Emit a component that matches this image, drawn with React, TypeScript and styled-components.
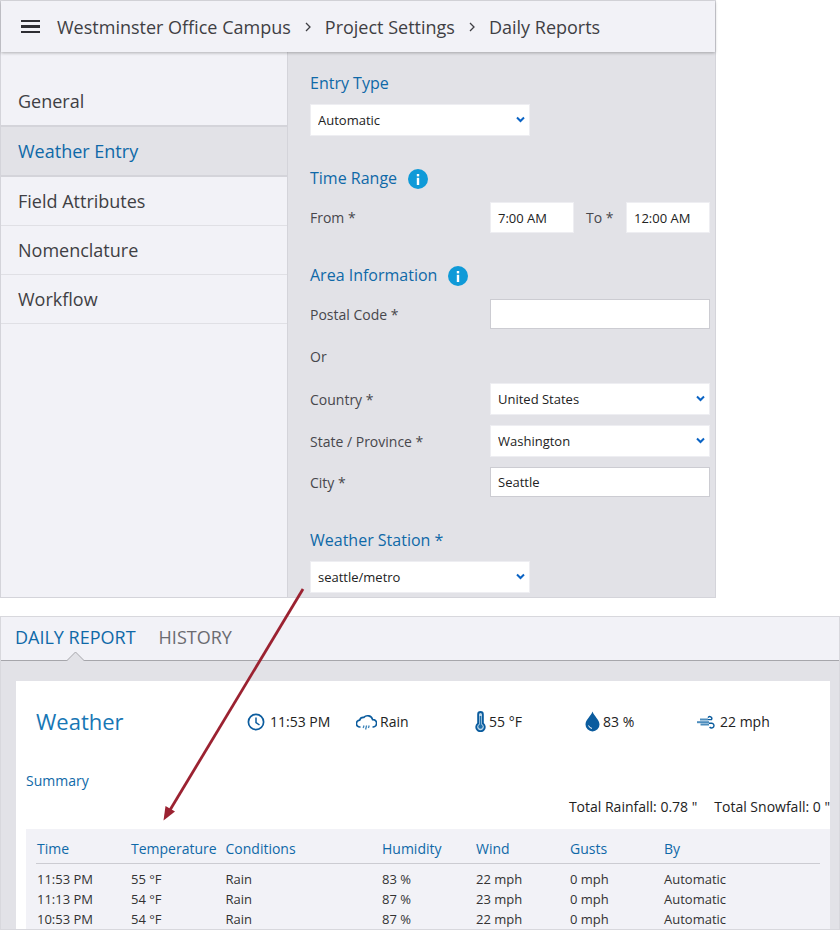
import styled, { createGlobalStyle } from "styled-components";

const GlobalStyle = createGlobalStyle`
  html, body {
    margin: 0;
    padding: 0;
    background: #fff;
    font-family: "Open Sans", "Liberation Sans", sans-serif;
    color: #3a3a3f;
  }
  * {
    box-sizing: border-box;
  }
`;

const BLUE = "#0f69a8";

const Page = styled.div`
  position: relative;
  width: 840px;
  height: 930px;
  overflow: hidden;
`;
const SettingsPanel = styled.div`
  width: 716px;
  height: 598px;
  display: flex;
  flex-direction: column;
  background: #e2e2e7;
  border: 1px solid #d4d4da;
  border-top-color: #dcdce1;
`;
const Header = styled.div`
  height: 51px;
  flex: none;
  display: flex;
  align-items: center;
  padding-left: 20px;
  background: #f2f2f7;
  box-shadow: 0 1px 3px rgba(0, 0, 0, 0.28);
  position: relative;
  font-size: 18px;
  color: #3f3f44;
`;
const Hamburger = styled.div`
  width: 19px;
  height: 13px;
  margin-right: 17px;
  border-top: 2.5px solid #2e2e33;
  border-bottom: 2.5px solid #2e2e33;
  display: flex;
  align-items: center;
  &::before {
    content: "";
    width: 100%;
    height: 2.5px;
    background: #2e2e33;
  }
`;
const Crumb = styled.span`
  line-height: 24px;
`;
const CrumbSep = styled.svg`
  width: 8px;
  height: 10px;
  margin: 0 13px;
`;
const Body = styled.div`
  flex: 1;
  display: flex;
  min-height: 0;
`;
const Sidebar = styled.div`
  width: 287px;
  flex: none;
  padding-top: 24px;
  background: #f2f2f7;
  border-right: 1px solid #d4d4da;
`;
const NavItem = styled.div<{ $active?: boolean; $strong?: boolean; $height: number }>`
  height: ${(p) => p.$height}px;
  display: flex;
  align-items: center;
  padding-left: 17px;
  font-size: 18px;
  background: ${(p) => (p.$active ? "#e2e2e7" : "transparent")};
  color: ${(p) => (p.$active ? BLUE : "#3f3f44")};
  border-bottom: ${(p) => (p.$strong ? "2px solid #d4d4da" : "1px solid #e0e0e5")};
`;
const Form = styled.div`
  flex: 1;
  padding: 20px 6px 0 22px;
  font-size: 14px;
`;
const SectionTitle = styled.div<{ $top?: number; $bottom: number }>`
  height: 22px;
  display: flex;
  align-items: center;
  gap: 11px;
  margin-top: ${(p) => p.$top ?? 0}px;
  margin-bottom: ${(p) => p.$bottom}px;
  font-size: 16px;
  color: ${BLUE};
`;
const InfoBadge = styled.span`
  width: 20px;
  height: 20px;
  border-radius: 50%;
  background: #0f9ad8;
  color: #fff;
  display: flex;
  align-items: center;
  justify-content: center;
  flex: none;
  position: relative;
  top: 1px;
`;
const FieldRow = styled.div<{ $height?: number; $bottom?: number }>`
  display: flex;
  align-items: center;
  height: ${(p) => p.$height ?? 31}px;
  margin-bottom: ${(p) => p.$bottom ?? 11}px;
`;
const FieldLabel = styled.div`
  width: 180px;
  flex: none;
  color: #47474c;
`;
const ToLabel = styled.div`
  width: 52px;
  flex: none;
  padding-left: 12px;
  color: #47474c;
`;
const TextBox = styled.input<{ $width: number; $bordered?: boolean }>`
  width: ${(p) => p.$width}px;
  height: 100%;
  padding: 0 7px;
  border: 1px solid ${(p) => (p.$bordered ? "#ccccd2" : "#eeeef2")};
  border-radius: 0;
  outline: none;
  background: #fff;
  color: #222;
  font: 13px "Open Sans", sans-serif;
`;
const SelectWrap = styled.div<{ $width: number }>`
  position: relative;
  width: ${(p) => p.$width}px;
  height: 32px;
`;
const SelectBox = styled.select`
  width: 100%;
  height: 100%;
  padding: 0 24px 0 7px;
  appearance: none;
  border: 1px solid #eeeef2;
  border-radius: 0;
  outline: none;
  background: #fff;
  color: #222;
  font: 13px "Open Sans", sans-serif;
`;
const Chevron = styled.svg`
  position: absolute;
  right: 5px;
  top: 12px;
  width: 9px;
  height: 7px;
`;
const ReportPanel = styled.div`
  margin-top: 18px;
  width: 840px;
  height: 314px;
  display: flex;
  flex-direction: column;
  background: #e2e2e7;
  border: 1px solid #d8d8dd;
`;
const Tabs = styled.div`
  height: 44px;
  flex: none;
  display: flex;
  align-items: center;
  gap: 23px;
  padding: 0 0 3px 14px;
  background: #f2f2f7;
  border-bottom: 1px solid #a6a6ab;
  position: relative;
  font-size: 18px;
`;
const Tab = styled.div<{ $active?: boolean }>`
  color: ${(p) => (p.$active ? BLUE : "#6b6b70")};
`;
const TabNotch = styled.svg`
  position: absolute;
  left: 65px;
  bottom: -1px;
  width: 19px;
  height: 10px;
`;
const Card = styled.div`
  flex: 1;
  margin: 20px 9px 0 15px;
  padding: 0 0 0 10px;
  background: #fff;
  display: flex;
  flex-direction: column;
  min-height: 0;
`;
const WeatherBar = styled.div`
  height: 80px;
  flex: none;
  display: flex;
  align-items: center;
  padding-top: 1px;
`;
const WeatherTitle = styled.div`
  width: 221px;
  margin-top: -2px;
  padding-left: 10px;
  font-size: 22px;
  color: #1877b5;
`;
const Stat = styled.div<{ $width: number; $gap?: number }>`
  width: ${(p) => p.$width}px;
  flex: none;
  display: flex;
  align-items: center;
  gap: ${(p) => p.$gap ?? 3}px;
  font-size: 14px;
  color: #222;
`;
const SummaryLink = styled.div`
  margin-top: 10px;
  height: 20px;
  font-size: 14px;
  line-height: 20px;
  color: ${BLUE};
`;
const TotalsRow = styled.div`
  display: flex;
  justify-content: flex-end;
  gap: 17px;
  height: 20px;
  margin-top: 6px;
  font-size: 14px;
  line-height: 20px;
  color: #222;
`;
const TableWrap = styled.div`
  margin-top: 12px;
  flex: 1;
  width: 804px;
  padding: 10px 10px 0;
  background: #f2f2f7;
`;
const Row = styled.div`
  display: grid;
  grid-template-columns: 94px 94.5px 156.5px 94px 94px 94px 1fr;
  height: 20px;
  line-height: 20px;
  font-size: 13px;
  color: #333;
`;
const HeadRow = styled(Row)`
  height: 25px;
  margin-bottom: 5px;
  border-bottom: 1px solid #ccccd2;
  font-size: 14px;
  color: ${BLUE};
`;
const Cell = styled.div`
  padding-left: 1px;
  white-space: nowrap;
`;
const ArrowOverlay = styled.svg`
  position: absolute;
  left: 0;
  top: 0;
  width: 840px;
  height: 930px;
  pointer-events: none;
`;

const DownChevron = () => (
  <Chevron viewBox="0 0 9 7">
    <path d="M1 1.5 4.5 5 8 1.5" fill="none" stroke="#0a63c4" strokeWidth="2" />
  </Chevron>
);

const Select = ({ value, width }: { value: string; width: number }) => (
  <SelectWrap $width={width}>
    <SelectBox defaultValue={value}>
      <option>{value}</option>
    </SelectBox>
    <DownChevron />
  </SelectWrap>
);

const Separator = () => (
  <CrumbSep viewBox="0 0 8 10">
    <path d="M2 1 6 5 2 9" fill="none" stroke="#3f3f44" strokeWidth="1.3" />
  </CrumbSep>
);

const Info = () => (
  <InfoBadge>
    <svg width="4" height="11" viewBox="0 0 4 11">
      <rect x="0.8" y="0" width="2.4" height="2.4" fill="#fff" />
      <rect x="0.8" y="3.8" width="2.4" height="7.2" fill="#fff" />
    </svg>
  </InfoBadge>
);

const ClockIcon = () => (
  <svg width="18" height="18" viewBox="0 0 18 18">
    <circle cx="9" cy="9" r="7.6" fill="none" stroke="#0b5c9e" strokeWidth="1.7" />
    <path d="M9 4.5V9.5L12.5 12" fill="none" stroke="#0b5c9e" strokeWidth="1.5" />
  </svg>
);

const RainIcon = () => (
  <svg width="21" height="18" viewBox="0 0 21 18">
    <path
      d="M4.5 14H4A3.4 3.4 0 0 1 3.6 7.2 4 4 0 0 1 7.8 4.4 5.2 5.2 0 0 1 16.6 6.6 3.7 3.7 0 0 1 17.2 14H16.5"
      fill="none"
      stroke="#0b5c9e"
      strokeWidth="1.7"
    />
    <path d="M8 12.5 7.2 15M10.6 12.5 9.6 16.5M13.2 12.5 12.4 15" fill="none" stroke="#3f86bb" strokeWidth="1.3" />
  </svg>
);

const ThermoIcon = () => (
  <svg width="11" height="21" viewBox="0 0 11 21">
    <path
      d="M2.2 3.4A3.3 3.3 0 0 1 8.8 3.4V12A5.2 5.2 0 1 1 2.2 12Z"
      fill="#0b5c9e"
    />
    <path d="M4 3.6A1.5 1.5 0 0 1 7 3.6V13A3.3 3.3 0 1 1 4 13Z" fill="#bcd6e9" />
    <path d="M5.5 5V14" stroke="#1f70ab" strokeWidth="1.6" />
    <circle cx="5.5" cy="15.6" r="2.2" fill="#1f70ab" />
  </svg>
);

const DropIcon = () => (
  <svg width="15" height="21" viewBox="0 0 15 21">
    <path d="M7.5 0.5C9 5 14.5 8.8 14.5 13.4A7 7 0 0 1 0.5 13.4C0.5 8.8 6 5 7.5 0.5Z" fill="#0b5c9e" />
    <path d="M3.6 14.5A4 4 0 0 0 7 17.4" fill="none" stroke="#fff" strokeWidth="1" />
  </svg>
);

const WindIcon = () => (
  <svg width="18" height="14" viewBox="0 0 18 14">
    <path d="M0 7.2H12" stroke="#4d8dbd" strokeWidth="2" />
    <path d="M3 4.6H11M3.5 9.6H12" stroke="#4d8dbd" strokeWidth="2" />
    <path d="M11 2.6A2 2 0 1 1 14.5 4.6H11" fill="none" stroke="#0b5c9e" strokeWidth="1.4" />
    <path d="M12 8.2H14.8A2.4 2.4 0 1 1 12.6 12" fill="none" stroke="#0b5c9e" strokeWidth="1.4" />
  </svg>
);

const navItems = [
  { label: "General", height: 51, strong: true },
  { label: "Weather Entry", height: 50, active: true, strong: true },
  { label: "Field Attributes", height: 49 },
  { label: "Nomenclature", height: 49 },
  { label: "Workflow", height: 49 },
];

const columns = ["Time", "Temperature", "Conditions", "Humidity", "Wind", "Gusts", "By"];

const rows = [
  ["11:53 PM", "55 °F", "Rain", "83 %", "22 mph", "0 mph", "Automatic"],
  ["11:13 PM", "54 °F", "Rain", "87 %", "23 mph", "0 mph", "Automatic"],
  ["10:53 PM", "54 °F", "Rain", "87 %", "22 mph", "0 mph", "Automatic"],
];

export default function App() {
  return (
    <Page>
      <GlobalStyle />
      <SettingsPanel>
        <Header>
          <Hamburger />
          <Crumb>Westminster Office Campus</Crumb>
          <Separator />
          <Crumb>Project Settings</Crumb>
          <Separator />
          <Crumb>Daily Reports</Crumb>
        </Header>
        <Body>
          <Sidebar>
            {navItems.map((item) => (
              <NavItem key={item.label} $active={item.active} $strong={item.strong} $height={item.height}>
                {item.label}
              </NavItem>
            ))}
          </Sidebar>
          <Form>
            <SectionTitle $bottom={10}>Entry Type</SectionTitle>
            <Select value="Automatic" width={220} />
            <SectionTitle $top={31} $bottom={13}>
              Time Range
              <Info />
            </SectionTitle>
            <FieldRow>
              <FieldLabel>From *</FieldLabel>
              <TextBox $width={84} defaultValue="7:00 AM" />
              <ToLabel>To *</ToLabel>
              <TextBox $width={84} defaultValue="12:00 AM" />
            </FieldRow>
            <SectionTitle $top={31} $bottom={13}>
              Area Information
              <Info />
            </SectionTitle>
            <FieldRow $height={30}>
              <FieldLabel>Postal Code *</FieldLabel>
              <TextBox $width={220} $bordered defaultValue="" />
            </FieldRow>
            <FieldRow $height={32} $bottom={11}>
              <FieldLabel>Or</FieldLabel>
            </FieldRow>
            <FieldRow $height={32} $bottom={10}>
              <FieldLabel>Country *</FieldLabel>
              <Select value="United States" width={220} />
            </FieldRow>
            <FieldRow $height={32} $bottom={10}>
              <FieldLabel>State / Province *</FieldLabel>
              <Select value="Washington" width={220} />
            </FieldRow>
            <FieldRow $height={30}>
              <FieldLabel>City *</FieldLabel>
              <TextBox $width={220} $bordered defaultValue="Seattle" />
            </FieldRow>
            <SectionTitle $top={32} $bottom={10}>Weather Station *</SectionTitle>
            <Select value="seattle/metro" width={220} />
          </Form>
        </Body>
      </SettingsPanel>
      <ReportPanel>
        <Tabs>
          <Tab $active>DAILY REPORT</Tab>
          <Tab>HISTORY</Tab>
          <TabNotch viewBox="0 0 19 10">
            <path d="M0.5 10 9.5 1 18.5 10" fill="#e2e2e7" stroke="#a6a6ab" strokeWidth="1" />
          </TabNotch>
        </Tabs>
        <Card>
          <WeatherBar>
            <WeatherTitle>Weather</WeatherTitle>
            <Stat $width={109} $gap={5}>
              <ClockIcon />
              11:53 PM
            </Stat>
            <Stat $width={119}>
              <RainIcon />
              Rain
            </Stat>
            <Stat $width={110}>
              <ThermoIcon />
              55 °F
            </Stat>
            <Stat $width={112}>
              <DropIcon />
              83 %
            </Stat>
            <Stat $width={90} $gap={5}>
              <WindIcon />
              22 mph
            </Stat>
          </WeatherBar>
          <SummaryLink>Summary</SummaryLink>
          <TotalsRow>
            <span>Total Rainfall: 0.78 "</span>
            <span>Total Snowfall: 0 "</span>
          </TotalsRow>
          <TableWrap>
            <HeadRow>
              {columns.map((c) => (
                <Cell key={c}>{c}</Cell>
              ))}
            </HeadRow>
            {rows.map((r, i) => (
              <Row key={i}>
                {r.map((v, j) => (
                  <Cell key={j}>{v}</Cell>
                ))}
              </Row>
            ))}
          </TableWrap>
        </Card>
      </ReportPanel>
      <ArrowOverlay viewBox="0 0 840 930">
        <path d="M303 589 170 810" fill="none" stroke="#9b2231" strokeWidth="2.8" />
        <path d="M163.5 820.5 165.5 806 175 811.5Z" fill="#9b2231" />
      </ArrowOverlay>
    </Page>
  );
}
